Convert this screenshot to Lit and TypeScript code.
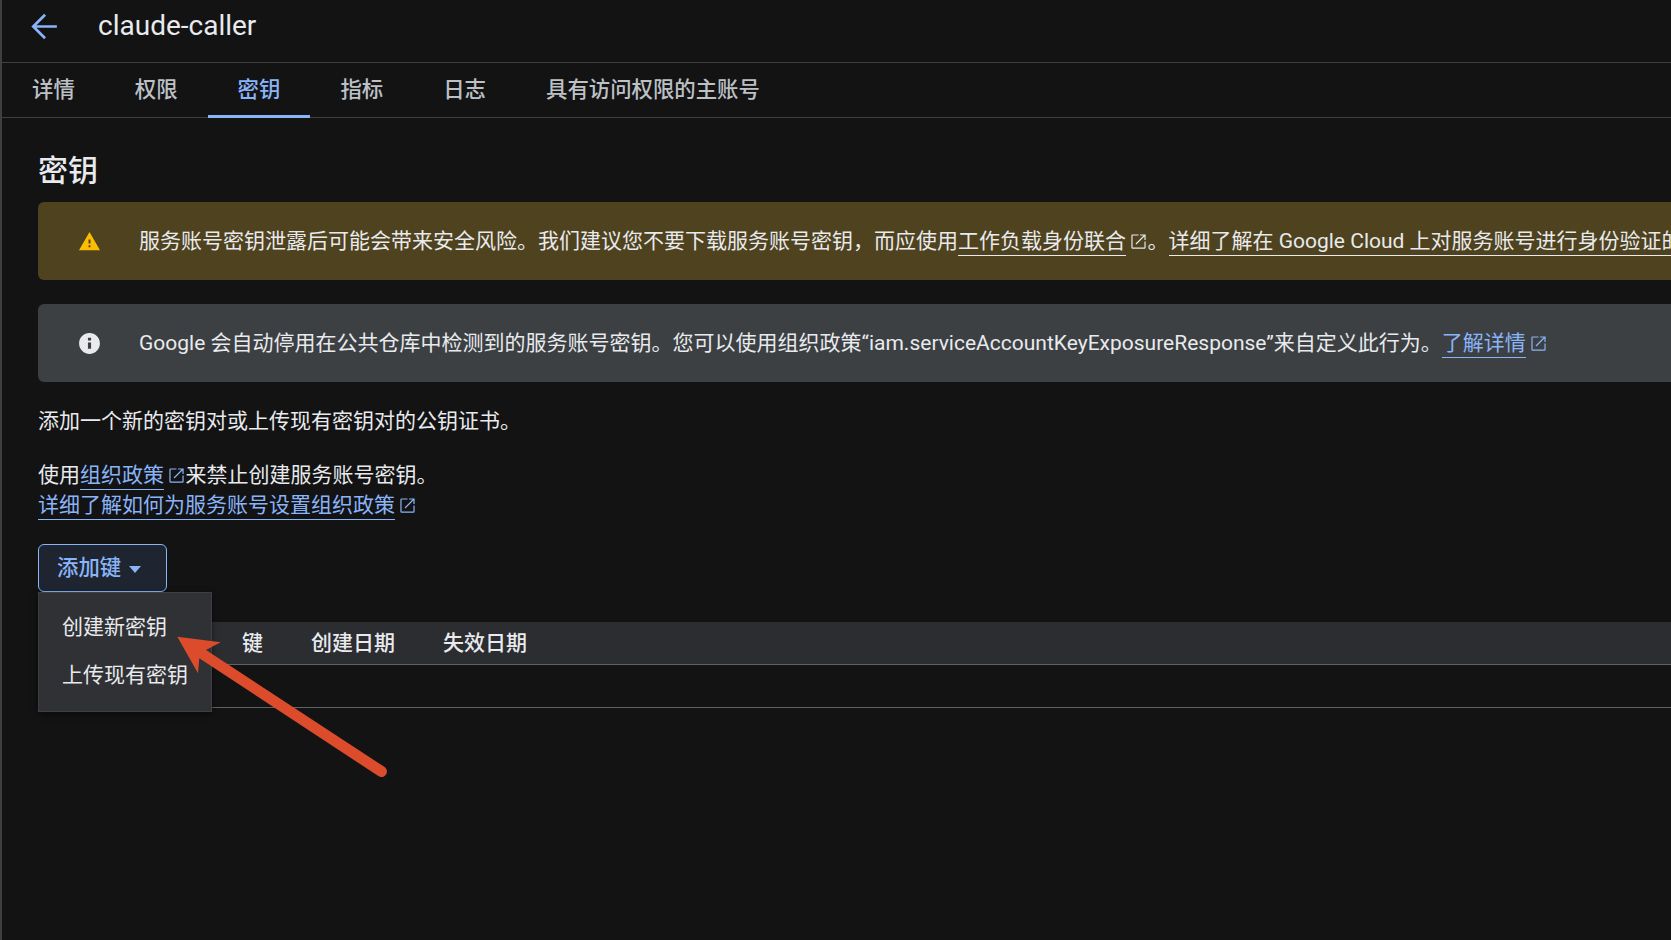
import { LitElement, html, css, svg } from "lit";
import { customElement } from "lit/decorators.js";

const ext = html`<svg class="ext" viewBox="0 0 24 24"><path fill="currentColor" d="M19.5 19.5h-15v-15H12V3H4.5A1.5 1.5 0 0 0 3 4.5v15A1.5 1.5 0 0 0 4.5 21h15a1.5 1.5 0 0 0 1.5-1.5V12h-1.5v7.5zM14 3v1.5h4.44L8.3 14.64l1.06 1.06L19.5 5.56V10H21V3h-7z"/></svg>`;

@customElement("app-root")
export class AppRoot extends LitElement {
  static styles = css`
    :host {
      display: block;
      width: 1671px;
      height: 940px;
      overflow: hidden;
      box-sizing: border-box;
      position: relative;
      background: #131314;
      border-left: 2px solid #3c4043;
      color: #e8eaed;
      font-family: Roboto, "Noto Sans CJK SC", sans-serif;
      font-size: 21px;
      line-height: 30px;
    }
    .top {
      height: 63px;
      box-sizing: border-box;
      border-bottom: 1.5px solid #3c4043;
      display: flex;
      align-items: center;
      padding: 0 0 10px 29px;
      gap: 40px;
    }
    .top svg { width: 27px; height: 27px; color: #8ab4f8; display: block; }
    .name { font-size: 28px; color: #e8eaed; }
    .tabs {
      display: flex;
      height: 55px;
      box-sizing: border-box;
      border-bottom: 1.5px solid #3c4043;
    }
    .tab {
      padding: 0 30px 0;
      display: flex;
      align-items: center;
      color: #bdc1c6;
      font-weight: 500;
      font-size: 21.4px;
      position: relative;
    }
    .tab.active { color: #8ab4f8; }
    .tab.active::after {
      content: "";
      position: absolute;
      left: 0; right: 0; bottom: -1px;
      height: 3px;
      background: #8ab4f8;
    }
    .main { padding: 0 0 0 36px; }
    h1 { margin: 0; font-size: 30px; font-weight: 500; line-height: 36px; padding-top: 35px; height: 84px; box-sizing: border-box; }
    .banner {
      height: 78px;
      border-radius: 6px;
      display: flex;
      align-items: center;
      white-space: nowrap;
      padding-left: 39px;
      gap: 37px;
      width: 1700px;
      box-sizing: border-box;
      overflow: hidden;
    }
    .banner > svg { width: 25px; height: 25px; flex: none; }
    .warn > svg { width: 23px; height: 23px; margin: 0 1px; }
    .warn { background: #4f421e; color: #e8eaed; margin-bottom: 24px; }
    .info { background: #3c4043; color: #e8eaed; margin-bottom: 24px; }
    a { color: inherit; text-decoration: none; border-bottom: 1.5px solid currentColor; padding-bottom: 2px; }
    .blue { color: #8ab4f8; }
    .ext { width: 19px; height: 19px; vertical-align: -2.5px; margin: 0 -0.5px 0 3px; }
    .iconblue { color: #8ab4f8; }
    p { margin: 0; white-space: nowrap; }
    .p1 { margin-bottom: 24px; }
    .wrap { position: relative; margin-top: 24px; }
    .btn {
      width: 129px;
      height: 48px;
      box-sizing: border-box;
      border: 1px solid #8ab4f8;
      border-radius: 6px;
      background: #1e2530;
      color: #8ab4f8;
      display: flex;
      align-items: center;
      padding-left: 18px;
      gap: 8px;
      font-weight: 500;
      font-size: 21.4px;
    }
    .caret { width: 0; height: 0; border-left: 6.5px solid transparent; border-right: 6.5px solid transparent; border-top: 7px solid #8ab4f8; margin-top: 2px; }
    .menu {
      position: absolute;
      left: 0; top: 48px;
      width: 174px;
      height: 120px;
      box-sizing: border-box;
      padding-top: 10px;
      background: #303134;
      border: 1px solid #3c4043;
      box-shadow: 0 2px 6px rgba(0,0,0,.5);
      z-index: 2;
    }
    .item { height: 48px; display: flex; align-items: center; padding-left: 23px; color: #e8eaed; font-size: 21px; white-space: nowrap; }
    .head {
      margin-top: 30px;
      height: 43px;
      box-sizing: border-box;
      background: #2b2d31;
      border-bottom: 1px solid #5f6368;
      display: flex;
      align-items: center;
      padding: 0 0 1px 204px;
      gap: 48px;
      font-weight: 500;
      font-size: 21px;
      color: #e8eaed;
    }
    .row { height: 43px; box-sizing: border-box; border-bottom: 1px solid #5f6368; }
    .arrow { position: absolute; left: -2px; top: 0; width: 1671px; height: 940px; pointer-events: none; z-index: 3; }
  `;

  render() {
    return html`
      <div class="top">
        <svg viewBox="0 0 24 24"><path fill="none" stroke="currentColor" stroke-width="2.4" d="M23 12H2.5M12.5 1.5 2 12l10.5 10.5"/></svg>
        <span class="name">claude-caller</span>
      </div>
      <div class="tabs">
        <div class="tab">详情</div>
        <div class="tab">权限</div>
        <div class="tab active">密钥</div>
        <div class="tab">指标</div>
        <div class="tab">日志</div>
        <div class="tab">具有访问权限的主账号</div>
      </div>
      <div class="main">
        <h1>密钥</h1>
        <div class="banner warn">
          <svg viewBox="0 0 24 24"><path fill="#fbbc04" d="M1 21h22L12 2 1 21zm12-3h-2v-2h2v2zm0-4h-2v-4h2v4z"/></svg>
          <span>服务账号密钥泄露后可能会带来安全风险。我们建议您不要下载服务账号密钥，而应使用<a>工作负载身份联合</a>${ext}。<a>详细了解在 Google Cloud 上对服务账号进行身份验证的最佳实践</a></span>
        </div>
        <div class="banner info">
          <svg viewBox="0 0 24 24"><path fill="#e8eaed" d="M12 2C6.48 2 2 6.48 2 12s4.48 10 10 10 10-4.48 10-10S17.52 2 12 2zm1.5 15h-3v-6h3v6zm0-8h-3V6.5h3V9z"/></svg>
          <span>Google 会自动停用在公共仓库中检测到的服务账号密钥。您可以使用组织政策“iam.serviceAccountKeyExposureResponse”来自定义此行为。<a class="blue">了解详情</a><span class="iconblue">${ext}</span></span>
        </div>
        <p class="p1">添加一个新的密钥对或上传现有密钥对的公钥证书。</p>
        <p>使用<a class="blue">组织政策</a><span class="iconblue">${ext}</span>来禁止创建服务账号密钥。</p>
        <p><a class="blue">详细了解如何为服务账号设置组织政策</a><span class="iconblue">${ext}</span></p>
        <div class="wrap">
          <div class="btn">添加键<span class="caret"></span></div>
          <div class="menu">
            <div class="item">创建新密钥</div>
            <div class="item">上传现有密钥</div>
          </div>
          <div class="head"><span>键</span><span>创建日期</span><span>失效日期</span></div>
          <div class="row"></div>
        </div>
      </div>
      <svg class="arrow" viewBox="0 0 1671 940">
        ${svg`<path fill="#db4b2c" d="M177.3 636.7 L220.7 642.3 L206 650 L384.7 767.1 A5.5 5.5 0 0 1 378.7 776.3 L199.3 658.3 L198 673.3 Z"/>`}
      </svg>
    `;
  }
}
